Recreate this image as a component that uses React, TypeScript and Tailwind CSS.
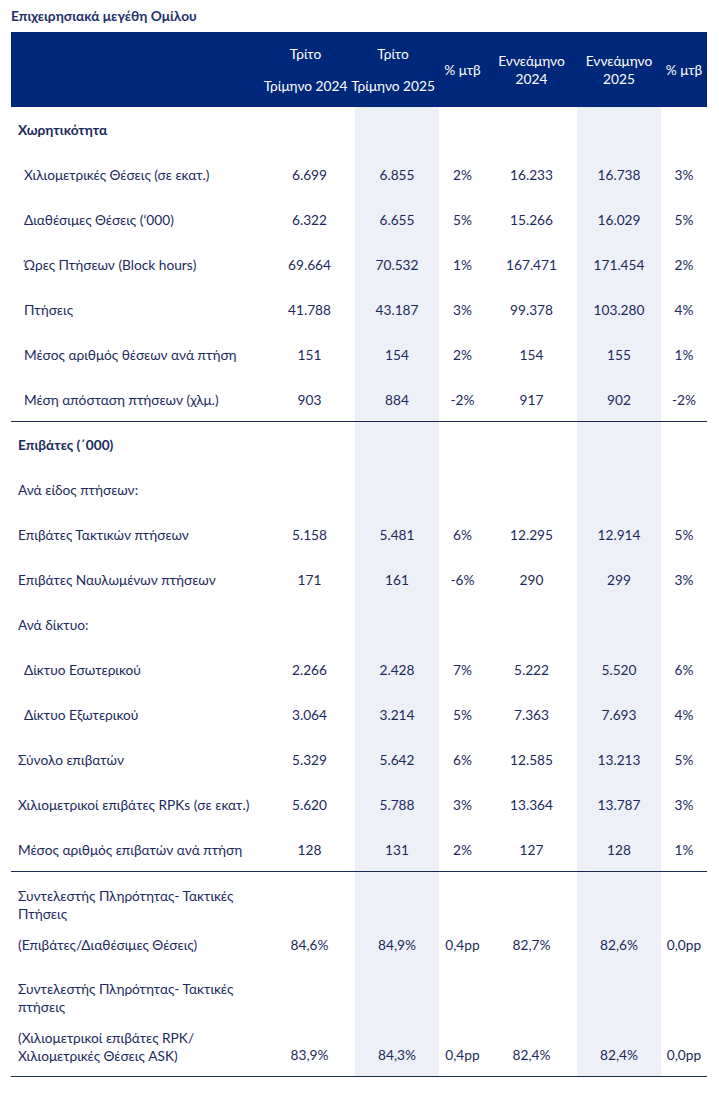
import React from "react";

type Row = {
    label: string;
    indent?: "sm" | "md";
    bold?: boolean;
    values?: string[];
    line?: boolean;
};

const cols = "grid grid-cols-[253px_91px_84px_47px_91px_84px_46px]";

const rows: Row[] = [
    { label: "Χωρητικότητα", bold: true },
    { label: "Χιλιομετρικές Θέσεις (σε εκατ.)", indent: "md", values: ["6.699", "6.855", "2%", "16.233", "16.738", "3%"] },
    { label: "Διαθέσιμες Θέσεις (‘000)", indent: "md", values: ["6.322", "6.655", "5%", "15.266", "16.029", "5%"] },
    { label: "Ώρες Πτήσεων (Block hours)", indent: "md", values: ["69.664", "70.532", "1%", "167.471", "171.454", "2%"] },
    { label: "Πτήσεις", indent: "md", values: ["41.788", "43.187", "3%", "99.378", "103.280", "4%"] },
    { label: "Μέσος αριθμός θέσεων ανά πτήση", indent: "md", values: ["151", "154", "2%", "154", "155", "1%"] },
    { label: "Μέση απόσταση πτήσεων (χλμ.)", indent: "md", values: ["903", "884", "-2%", "917", "902", "-2%"], line: true },
    { label: "Επιβάτες (΄000)", bold: true },
    { label: "Ανά είδος πτήσεων:" },
    { label: "Επιβάτες Τακτικών πτήσεων", values: ["5.158", "5.481", "6%", "12.295", "12.914", "5%"] },
    { label: "Επιβάτες Ναυλωμένων πτήσεων", values: ["171", "161", "-6%", "290", "299", "3%"] },
    { label: "Ανά δίκτυο:" },
    { label: "Δίκτυο Εσωτερικού", indent: "md", values: ["2.266", "2.428", "7%", "5.222", "5.520", "6%"] },
    { label: "Δίκτυο Εξωτερικού", indent: "md", values: ["3.064", "3.214", "5%", "7.363", "7.693", "4%"] },
    { label: "Σύνολο επιβατών", values: ["5.329", "5.642", "6%", "12.585", "13.213", "5%"] },
    { label: "Χιλιομετρικοί επιβάτες RPKs (σε εκατ.)", values: ["5.620", "5.788", "3%", "13.364", "13.787", "3%"] },
    { label: "Μέσος αριθμός επιβατών ανά πτήση", values: ["128", "131", "2%", "127", "128", "1%"], line: true },
];

// shaded columns: Τρίτο Τρίμηνο 2025 and Εννεάμηνο 2025
const shade = [false, true, false, false, true, false];

const ValueCells = ({ values, align = "items-center pt-[2px]", pad = "" }: { values?: string[]; align?: string; pad?: string }) => (
    <>
        {shade.map((s, i) => (
            <div key={i} className={`flex justify-center ${align} ${pad} ${s ? "bg-[#edf0f7]" : ""}`}>
                {values ? values[i] : ""}
            </div>
        ))}
    </>
);

export default function App() {
    return (
        <div className="bg-white min-h-[1096px] text-[13.7px] text-[#1b2a5c] font-['Lato','Liberation_Sans',sans-serif]">
            <div className="ml-[11px] w-[696px]">
                <div className="h-[32px] flex items-center font-bold text-[#24306b]">
                    Επιχειρησιακά μεγέθη Ομίλου
                </div>

                {/* header */}
                <div className={`${cols} h-[75px] bg-[#00287a] text-white leading-[18px]`}>
                    <div />
                    <div className="flex flex-col items-center justify-center gap-[14px] pr-2 whitespace-nowrap">
                        <span>Τρίτο</span>
                        <span>Τρίμηνο 2024</span>
                    </div>
                    <div className="flex flex-col items-center justify-center gap-[14px] pr-2 whitespace-nowrap">
                        <span>Τρίτο</span>
                        <span>Τρίμηνο 2025</span>
                    </div>
                    <div className="flex items-center justify-center whitespace-nowrap">% μτβ</div>
                    <div className="flex flex-col items-center justify-center whitespace-nowrap">
                        <span>Εννεάμηνο</span>
                        <span>2024</span>
                    </div>
                    <div className="flex flex-col items-center justify-center whitespace-nowrap">
                        <span>Εννεάμηνο</span>
                        <span>2025</span>
                    </div>
                    <div className="flex items-center justify-center whitespace-nowrap">% μτβ</div>
                </div>

                {rows.map((r, idx) => (
                    <div key={idx} className={`${cols} h-[45px] ${r.line ? "border-b border-[#1d2a52]" : ""}`}>
                        <div className={`flex items-center pt-[2px] whitespace-nowrap ${r.indent === "md" ? "pl-[13px]" : "pl-[7px]"} ${r.bold ? "font-bold" : ""}`}>
                            {r.label}
                        </div>
                        <ValueCells values={r.values} />
                    </div>
                ))}

                {/* load factor rows */}
                <div className={`${cols} h-[50px] leading-[18px]`}>
                    <div className="pl-[7px] pt-[15px]">
                        Συντελεστής Πληρότητας- Τακτικές
                        <br />
                        Πτήσεις
                    </div>
                    <ValueCells />
                </div>
                <div className={`${cols} h-[44px]`}>
                    <div className="flex items-center pt-[2px] pl-[7px]">(Επιβάτες/Διαθέσιμες Θέσεις)</div>
                    <ValueCells values={["84,6%", "84,9%", "0,4pp", "82,7%", "82,6%", "0,0pp"]} />
                </div>
                <div className={`${cols} h-[49px] leading-[18px]`}>
                    <div className="pl-[7px] pt-[14px]">
                        Συντελεστής Πληρότητας- Τακτικές
                        <br />
                        πτήσεις
                    </div>
                    <ValueCells />
                </div>
                <div className={`${cols} h-[62px] leading-[18px] border-b border-[#1d2a52]`}>
                    <div className="pl-[7px] pt-[14px]">
                        (Χιλιομετρικοί επιβάτες RPK/
                        <br />
                        Χιλιομετρικές Θέσεις ASK)
                    </div>
                    <ValueCells values={["83,9%", "84,3%", "0,4pp", "82,4%", "82,4%", "0,0pp"]} align="items-end" pad="pb-[12px]" />
                </div>
            </div>
        </div>
    );
}
